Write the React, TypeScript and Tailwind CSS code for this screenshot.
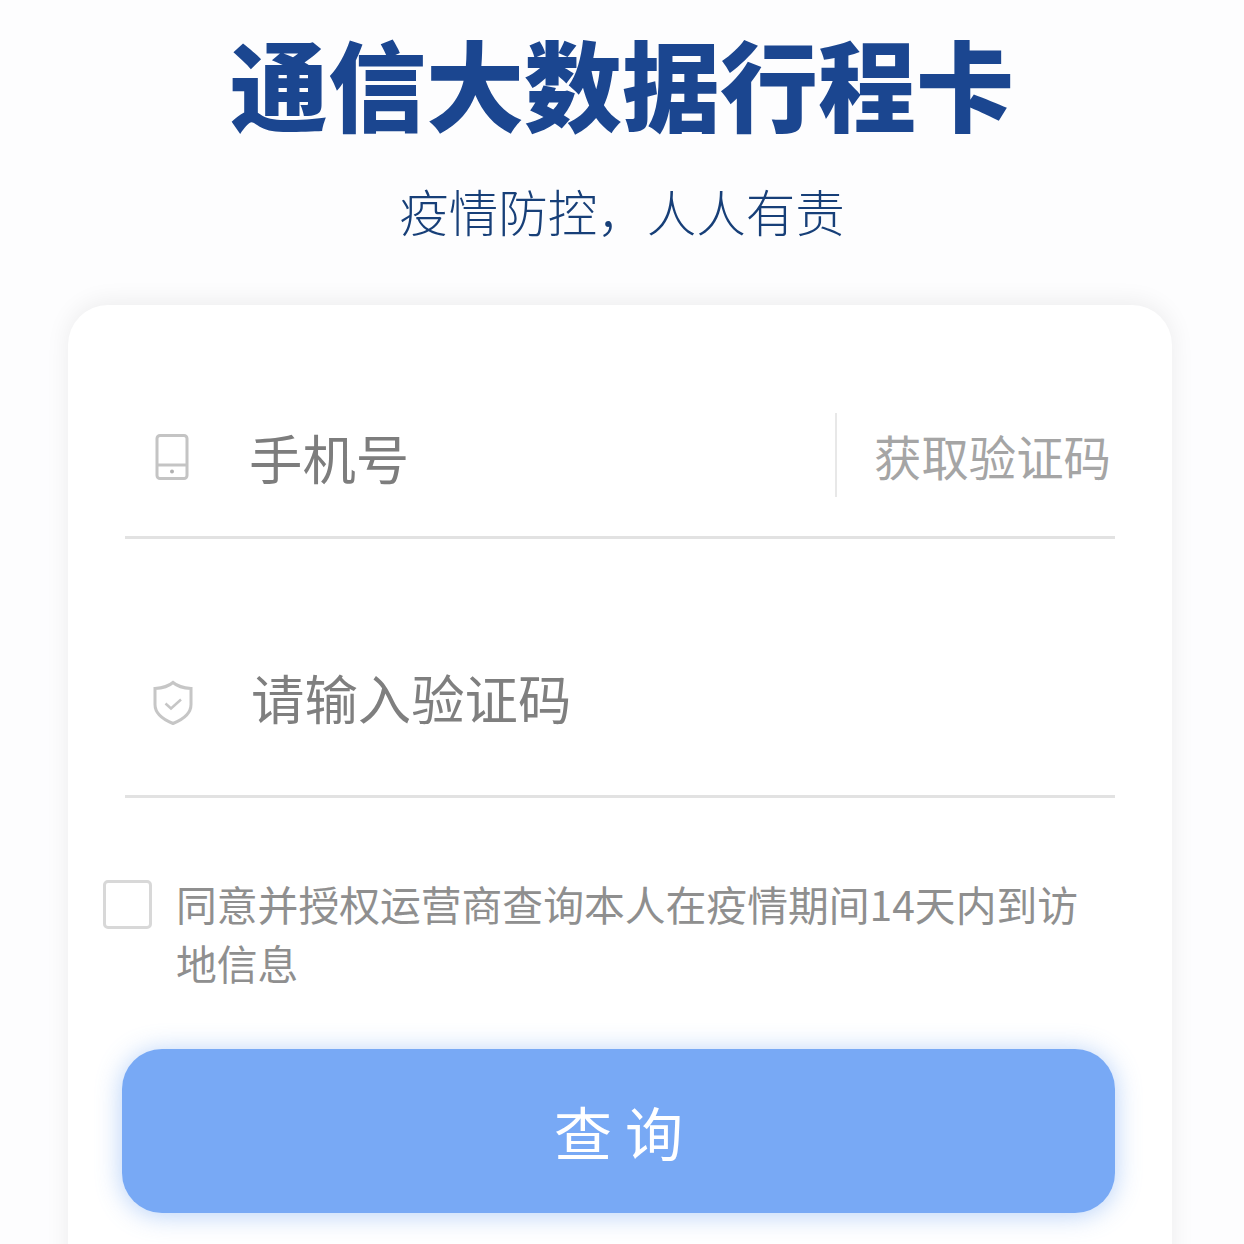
const cjk = { fontFamily: '"Noto Sans CJK SC", "Noto Sans", sans-serif' };

function PhoneIcon() {
  return (
    <svg width="36" height="48" viewBox="0 0 36 48" fill="none" stroke="#c4c4c4" strokeWidth="3">
      <rect x="3" y="2.500" width="30" height="43" rx="3" />
      <path d="M3 32h30" />
      <circle cx="18" cy="38.500" r="2" fill="#b0b0b0" stroke="none" />
    </svg>
  );
}

function ShieldIcon() {
  return (
    <svg width="42" height="46" viewBox="0 0 42 46" fill="none" stroke="#c6c6c6" strokeWidth="3">
      <path d="M21 2.500c4 3.500 10 5.500 18 6v16c0 9-8 15-18 19C11 39.500 3 33.500 3 24.500v-16c8-.5 14-2.500 18-6z" />
      <path d="M13.500 23.500l5.500 5 10-9" strokeWidth="2.500" />
    </svg>
  );
}

export default function App() {
  return (
    <div className="h-[1244px] overflow-hidden bg-[#fdfdfe]" style={cjk}>
      <div className="flex flex-col items-center pt-[17px]">
        <h1 className="text-[98px] leading-[128px] font-black text-[#1b4690] whitespace-nowrap">通信大数据行程卡</h1>
        <p className="mt-[30px] text-[49.500px] leading-[72px] font-light text-[#173f78] whitespace-nowrap">{'疫情防控\uFF0C人人有责'}</p>
      </div>

      <div className="ml-[68px] mr-[72px] mt-[58px] h-[1000px] rounded-[40px] bg-white shadow-[0_-3px_24px_rgba(0,0,0,0.07)] pt-[108px]">
        <div className="mx-[57px] flex h-[126px] items-start border-b-[3px] border-[#e2e2e2]">
          <div className="flex w-[124px] h-[92px] pl-[29px] pt-[20px] shrink-0">
            <PhoneIcon />
          </div>
          <span className="flex-1 text-[53.400px] leading-[88px] text-[#7d7d7d]">手机号</span>
          <div className="h-[84px] border-l-[2px] border-[#e8e8e8] pl-[37px] pr-[4px] flex items-center">
            <span className="mt-[2px] text-[47.400px] leading-[92px] text-[#a5a5a5] whitespace-nowrap">获取验证码</span>
          </div>
        </div>

        <div className="mx-[57px] mt-[133px] flex h-[126px] items-start border-b-[3px] border-[#e2e2e2]">
          <div className="w-[126px] pl-[27px] pt-[8px] shrink-0">
            <ShieldIcon />
          </div>
          <span className="text-[53.400px] leading-[50px] text-[#7f7f7f]">请输入验证码</span>
        </div>

        <div className="ml-[35px] mr-[90px] mt-[74px] flex items-start">
          <div className="mt-[8px] h-[49px] w-[49px] shrink-0 rounded-[5px] border-[3px] border-[#d8d8d8] bg-white" />
          <p className="ml-[24px] mt-[2px] text-[40.800px] leading-[59px] text-[#8f8f8f]">同意并授权运营商查询本人在疫情期间14天内到访地信息</p>
        </div>

        <button className="ml-[54px] mt-[57px] flex h-[164px] w-[993px] items-center justify-center rounded-[40px] bg-[#78a9f5] text-[58px] text-white shadow-[0_2px_26px_rgba(90,150,240,0.45)]">
          查 询
        </button>
      </div>
    </div>
  );
}
